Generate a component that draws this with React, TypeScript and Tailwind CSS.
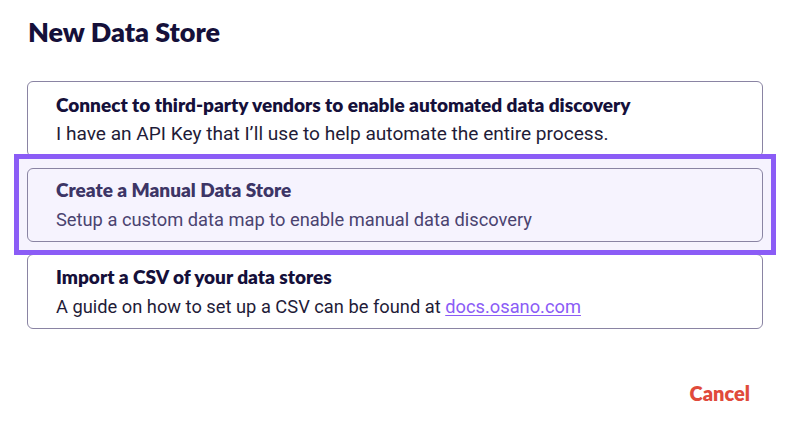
import React from "react";

const head = { fontFamily: "Lato, 'Noto Sans', sans-serif" };
const body = { fontFamily: "Roboto, 'Liberation Sans', sans-serif" };

export default function App() {
  return (
    <div className="w-[788px] h-[438px] bg-white relative overflow-hidden">
      <div className="pl-[28px] pt-[14px]">
        <h1 style={head} className="text-[27px] leading-[36px] font-extrabold text-[#15103a]">
          New Data Store
        </h1>
      </div>
      <div className="mt-[31px] ml-[27px] mr-[25px] flex flex-col">
        <div className="rounded-[6px] border border-[#8a84a3] bg-white pl-[28px] pr-4 pt-[11px] pb-[10px] flex flex-col gap-[5px]">
          <div style={head} className="text-[19px] leading-[24px] font-extrabold text-[#15103a]">
            Connect to third-party vendors to enable automated data discovery
          </div>
          <div style={body} className="text-[19.1px] leading-[24px] text-[#1f1c38]">
            I have an API Key that I’ll use to help automate the entire process.
          </div>
        </div>
        <div className="relative z-10 -mx-[13px] -mt-[3px] border-[5px] border-[#8b5cf6] bg-[#f6f3fe] px-[8px] pt-[9px] pb-[8px]">
          <div className="rounded-[6px] border border-[#8a84a3] bg-[#f6f3fe] pl-[28px] pr-4 pt-[9px] pb-[9px] flex flex-col gap-[6px]">
            <div style={head} className="text-[19px] leading-[24px] font-extrabold text-[#3d3566]">
              Create a Manual Data Store
            </div>
            <div style={body} className="text-[18.3px] leading-[24px] text-[#4a4370]">
              Setup a custom data map to enable manual data discovery
            </div>
          </div>
        </div>
        <div className="-mt-[1px] rounded-[6px] border border-[#8a84a3] bg-white pl-[28px] pr-4 pt-[10px] pb-[9px] flex flex-col gap-[6px]">
          <div style={head} className="text-[19px] leading-[24px] font-extrabold text-[#15103a]">
            Import a CSV of your data stores
          </div>
          <div style={body} className="text-[18.3px] leading-[24px] text-[#1f1c38]">
            A guide on how to set up a CSV can be found at{" "}
            <a href="#" className="text-[#8b5cf6] underline underline-offset-2">docs.osano.com</a>
          </div>
        </div>
      </div>
      <div className="flex justify-end pr-[38px] mt-[51px]">
        <button style={head} className="text-[20px] leading-[26px] font-extrabold text-[#e04a3b]">
          Cancel
        </button>
      </div>
    </div>
  );
}
